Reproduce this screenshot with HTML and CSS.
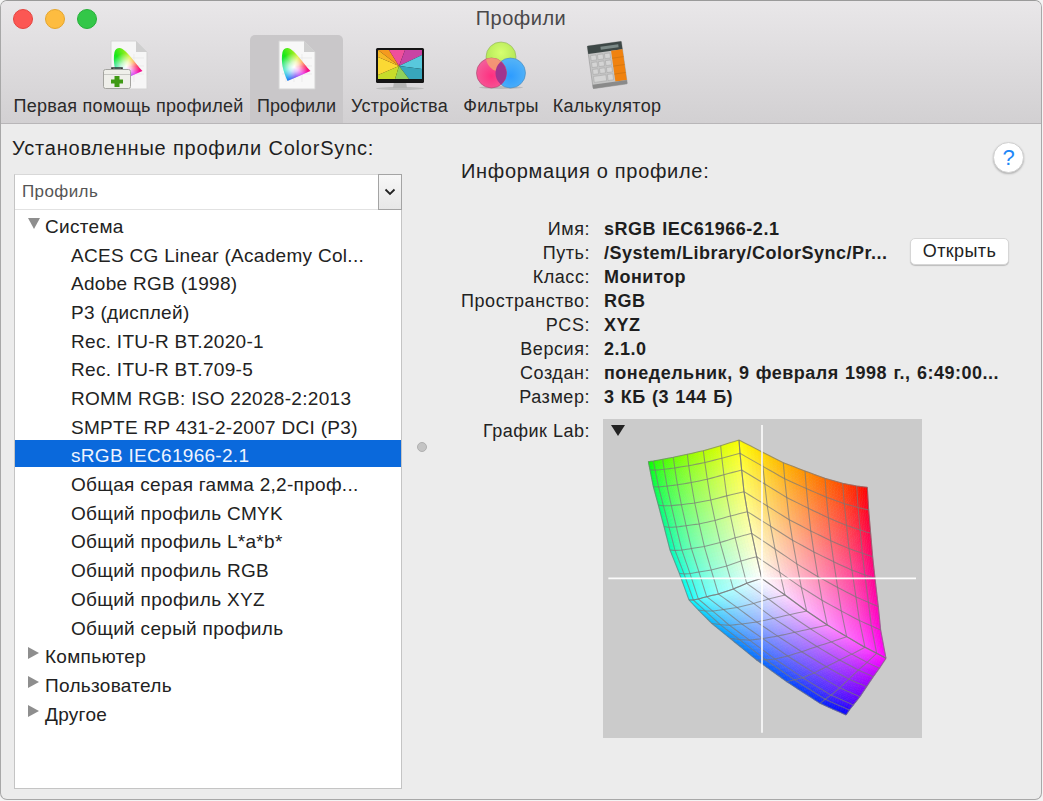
FILE: index.html
```html
<!DOCTYPE html>
<html lang="ru">
<head>
<meta charset="utf-8">
<title>Профили</title>
<link rel="stylesheet" href="styles.css">
</head>
<body>
<div class="window">
  <header class="toolbar">
    <div class="titlebar">
      <div class="lights">
        <span class="light red"></span>
        <span class="light yellow"></span>
        <span class="light green"></span>
      </div>
      <div class="title">Профили</div>
    </div>
    <nav class="tabs">
      <div class="tab tab-aid">
        <div class="icon doc-icon">
          <svg class="page" width="38" height="50" viewBox="0 0 38 50"><path d="M1 1H26L37 12V49H1Z" fill="#f6f6f6" stroke="#d4d4d4"/><path d="M26 1V12H37Z" fill="#cfcfcf"/><path d="M8 10V42M16 10V42M24 14V42M4 18H34M4 26H34M4 34H34" stroke="#e6e6e6" stroke-width=".7"/></svg>
          <div class="cie"></div>
          <svg class="kit" width="28" height="22" viewBox="0 0 28 22"><path d="M9 2.500V1H19V2.500" fill="none" stroke="#333" stroke-width="1.600"/><rect x=".5" y="2.500" width="27" height="19" rx="2" fill="#efefea" stroke="#a4a4a0"/><path d="M1 7.500H27" stroke="#c8c8c4"/><path d="M11.500 9H16.500V12.500H20V16.500H16.500V20H11.500V16.500H8V12.500H11.500Z" fill="#3f9a14"/></svg>
        </div>
        <span class="tab-label">Первая помощь профилей</span>
      </div>
      <div class="tab tab-profiles active">
        <div class="icon doc-icon">
          <svg class="page" width="38" height="50" viewBox="0 0 38 50"><path d="M1 1H26L37 12V49H1Z" fill="#f8f8f8" stroke="#d4d4d4"/><path d="M26 1V12H37Z" fill="#cfcfcf"/><path d="M8 10V42M16 10V42M24 14V42M4 18H34M4 26H34M4 34H34" stroke="#e6e6e6" stroke-width=".7"/></svg>
          <div class="cie"></div>
        </div>
        <span class="tab-label label-tight">Профили</span>
      </div>
      <div class="tab tab-devices">
        <svg class="icon" width="50" height="44" viewBox="0 0 50 44">
          <ellipse cx="25" cy="41.500" rx="24" ry="1.500" fill="#bdbdbd"/>
          <path d="M19 35H31L32 41H18Z" fill="#b4b4b4"/>
          <rect x="1" y="1" width="48" height="35" rx="1.500" fill="#141414"/>
          <polygon points="3,3 14,3 24,19" fill="#f59a1f"/>
          <polygon points="14,3 30,3 24,19" fill="#ef4f9c"/>
          <polygon points="30,3 47,3 47,8 24,19" fill="#c844a4"/>
          <polygon points="47,8 47,22 24,19" fill="#58c8dc"/>
          <polygon points="47,22 47,32 34,32 24,19" fill="#38a6bc"/>
          <polygon points="34,32 20,32 24,19" fill="#8fd05a"/>
          <polygon points="20,32 3,32 3,28 24,19" fill="#c7dc2a"/>
          <polygon points="3,28 3,10 24,19" fill="#fbd934"/>
          <polygon points="3,10 3,3 24,19" fill="#f7b927"/>
        </svg>
        <span class="tab-label">Устройства</span>
      </div>
      <div class="tab tab-filters">
        <svg class="icon" width="52" height="50" viewBox="0 0 52 50">
          <defs>
            <radialGradient id="gG" cx=".5" cy=".35" r=".7"><stop offset="0" stop-color="#d6ff70"/><stop offset="1" stop-color="#a9e050"/></radialGradient>
            <radialGradient id="gP" cx=".5" cy=".6" r=".7"><stop offset="0" stop-color="#ff2f80"/><stop offset="1" stop-color="#f06aa0"/></radialGradient>
            <radialGradient id="gB" cx=".5" cy=".6" r=".7"><stop offset="0" stop-color="#2d9cff"/><stop offset="1" stop-color="#5cb8f5"/></radialGradient>
            <clipPath id="clipPink"><circle cx="16.500" cy="33" r="15"/></clipPath>
          </defs>
          <ellipse cx="26" cy="47.500" rx="22" ry="1.500" fill="#bbb"/>
          <circle cx="26" cy="17" r="15" fill="url(#gG)" stroke="#8fb05a" stroke-width=".6"/>
          <circle cx="35.500" cy="33" r="15" fill="url(#gB)" stroke="#4a88b8" stroke-width=".6"/>
          <circle cx="16.500" cy="33" r="15" fill="url(#gP)" stroke="#a8446c" stroke-width=".6"/>
          <g clip-path="url(#clipPink)">
            <circle cx="26" cy="17" r="15" fill="#f2a070" fill-opacity=".85"/>
            <circle cx="35.500" cy="33" r="15" fill="#a0358f"/>
          </g>
        </svg>
        <span class="tab-label">Фильтры</span>
      </div>
      <div class="tab tab-calc">
        <svg class="icon" width="46" height="50" viewBox="0 0 46 50">
          <g transform="rotate(-8 23 25)">
            <rect x="6" y="3.500" width="34.500" height="43" rx="1" fill="#c4c4c4" stroke="#8f8f8f" stroke-width=".5"/>
            <rect x="6" y="3.500" width="34.500" height="8" fill="#3e4847"/>
            <rect x="19" y="6" width="18" height="3" fill="#7b8987"/>
            <rect x="29" y="11.500" width="11.500" height="31" fill="#f0820f"/>
            <path d="M29 19H40.500M29 27H40.500M29 35H40.500" stroke="#c9700f" stroke-width=".6"/>
            <g fill="#d4d4d4" stroke="#9c9c9c" stroke-width=".4">
              <rect x="8" y="13.500" width="5.500" height="5"/><rect x="15" y="13.500" width="5.500" height="5"/><rect x="22" y="13.500" width="5.500" height="5"/>
              <rect x="8" y="20.500" width="5.500" height="5"/><rect x="15" y="20.500" width="5.500" height="5"/><rect x="22" y="20.500" width="5.500" height="5"/>
              <rect x="8" y="27.500" width="5.500" height="5"/><rect x="15" y="27.500" width="5.500" height="5"/><rect x="22" y="27.500" width="5.500" height="5"/>
              <rect x="8" y="34.500" width="12.500" height="6"/><rect x="22" y="34.500" width="5.500" height="6"/>
            </g>
            <rect x="6" y="42.500" width="34.500" height="4" fill="#8a8a8a"/>
          </g>
        </svg>
        <span class="tab-label">Калькулятор</span>
      </div>
    </nav>
  </header>

  <main class="content">
    <section class="left">
      <h2 class="left-title">Установленные профили ColorSync:</h2>
      <div class="list">
        <div class="list-head">
          <span class="list-head-label">Профиль</span>
          <span class="list-head-btn"><svg width="12" height="8" viewBox="0 0 12 8"><path d="M1.500 1.500L6 6L10.500 1.500" fill="none" stroke="#222" stroke-width="1.800"/></svg></span>
        </div>
        <ul class="rows">
          <li class="row group"><i class="tri tri-open"></i>Система</li>
          <li class="row item">ACES CG Linear (Academy Col...</li>
          <li class="row item">Adobe RGB (1998)</li>
          <li class="row item">P3 (дисплей)</li>
          <li class="row item">Rec. ITU-R BT.2020-1</li>
          <li class="row item">Rec. ITU-R BT.709-5</li>
          <li class="row item">ROMM RGB: ISO 22028-2:2013</li>
          <li class="row item">SMPTE RP 431-2-2007 DCI (P3)</li>
          <li class="row item selected">sRGB IEC61966-2.1</li>
          <li class="row item">Общая серая гамма 2,2-проф...</li>
          <li class="row item">Общий профиль CMYK</li>
          <li class="row item">Общий профиль L*a*b*</li>
          <li class="row item">Общий профиль RGB</li>
          <li class="row item">Общий профиль XYZ</li>
          <li class="row item">Общий серый профиль</li>
          <li class="row group"><i class="tri tri-closed"></i>Компьютер</li>
          <li class="row group"><i class="tri tri-closed"></i>Пользователь</li>
          <li class="row group"><i class="tri tri-closed"></i>Другое</li>
        </ul>
      </div>
    </section>

    <div class="splitter"><span class="splitter-dot"></span></div>

    <section class="right">
      <div class="right-head">
        <h2 class="right-title">Информация о профиле:</h2>
        <button class="help" type="button">?</button>
      </div>
      <dl class="info">
        <dt>Имя:</dt><dd>sRGB IEC61966-2.1</dd>
        <dt>Путь:</dt><dd class="path-row"><span class="path">/System/Library/ColorSync/Pr...</span><button class="open" type="button">Открыть</button></dd>
        <dt>Класс:</dt><dd>Монитор</dd>
        <dt>Пространство:</dt><dd>RGB</dd>
        <dt>PCS:</dt><dd>XYZ</dd>
        <dt>Версия:</dt><dd>2.1.0</dd>
        <dt>Создан:</dt><dd>понедельник, 9 февраля 1998 г., 6:49:00...</dd>
        <dt>Размер:</dt><dd>3 КБ (3 144 Б)</dd>
      </dl>
      <div class="lab">
        <div class="lab-label">График Lab:</div>
        <div class="lab-frame">
          <canvas id="gamut" width="319" height="319"></canvas>
          <i class="lab-tri"></i>
        </div>
      </div>
    </section>
  </main>
</div>
<script src="gamut.js"></script>
</body>
</html>
```

FILE: styles.css
```css
* { box-sizing: border-box; }
html, body { margin: 0; padding: 0; height: 100%; background: #f4f4f4; }
body { font-family: "Liberation Sans", Arial, sans-serif; font-size: 17px; color: #222; overflow: hidden; }

.window {
  width: 1042px; height: 800px;
  border-radius: 7px; overflow: hidden;
  border: 1px solid #a8a8a8; border-top-color: #9a9a9a;
  display: flex; flex-direction: column;
  background: #ececec;
}

.toolbar {
  height: 123px; flex: none;
  background: linear-gradient(#e9e7e9, #d2d0d2);
  border-bottom: 1px solid #b8b6b8;
  display: flex; flex-direction: column;
}
.titlebar { height: 34px; display: grid; grid-template-columns: 1fr auto 1fr; align-items: center; flex: none; }
.lights { display: flex; gap: 12px; padding-left: 12px; padding-top: 1px; }
.light { width: 20px; height: 20px; border-radius: 50%; }
.red { background: #fc5753; border: 1px solid #e5443f; }
.yellow { background: #fdbc40; border: 1px solid #e5a52c; }
.green { background: #33c748; border: 1px solid #27b03a; }
.title { font-size: 20px; color: #4a484a; letter-spacing: .5px; }

.tabs { display: flex; flex: 1; padding-left: 6px; align-items: stretch; }
.tab { display: flex; flex-direction: column; align-items: center; justify-content: flex-end; padding: 0 7px 7px; color: #2a2a2a; }
.tab-label { font-size: 18px; letter-spacing: .3px; line-height: 20px; white-space: nowrap; }
.label-tight { letter-spacing: .1px; }
.tab .icon { flex: none; }
.active { background: #c9c7c9; border-radius: 5px 5px 0 0; }

.tab-aid { width: 243px; }
.tab-profiles { width: 93px; }
.tab-devices { width: 113px; }
.tab-filters { width: 90px; }
.tab-calc { width: 122px; }
svg.icon { margin-bottom: 6px; }
.tab-devices svg.icon { margin-bottom: 5px; }

.doc-icon { position: relative; width: 38px; height: 50px; margin-bottom: 6px; }
.page { display: block; }
.cie {
  position: absolute; left: 0; top: 0; width: 38px; height: 50px;
  background:
    radial-gradient(circle at 16px 27px, #fff 0, rgba(255,255,255,.75) 5px, rgba(255,255,255,0) 14px),
    conic-gradient(from -40deg at 16px 27px, #18e818, #d8f020 60deg, #ff9010 95deg, #ff1040 125deg, #e810e0 165deg, #5010f0 210deg, #10a0f0 255deg, #10e0c0 290deg, #18e818 360deg);
  clip-path: path("M10 41 C6 32 3 22 5 12 C6 8 10 7 13 9 C20 14 26 24 33 31 Z");
}
.kit { position: absolute; left: -7px; top: 27px; }

.content { flex: 1; display: flex; min-height: 0; }
.left { width: 401px; flex: none; padding: 11px 0 10px 11px; display: flex; flex-direction: column; }
.left-title { font-size: 20px; letter-spacing: .8px; font-weight: 400; margin: 0 0 13px; line-height: 26px; color: #1e1e1e; white-space: nowrap; }
.list { margin-left: 2px; width: 388px; flex: 1; background: #fff; border: 1px solid #c4c4c4; border-top-color: #d8d8d8; display: flex; flex-direction: column; min-height: 0; }
.list-head { height: 35px; flex: none; display: flex; align-items: center; justify-content: space-between; border-bottom: 1px solid #e2e2e2; }
.list-head-label { padding-left: 7px; font-size: 17px; letter-spacing: .4px; color: #555; }
.list-head-btn { width: 24px; height: 36px; margin-right: -1px; margin-top: -1px; background: linear-gradient(#f7f7f7, #e7e7e7); border: 1px solid #a4a4a4; display: flex; align-items: center; justify-content: center; }
.rows { list-style: none; margin: 0; padding: 2.900px 0 0; }
.row { height: 28.700px; line-height: 28.700px; font-size: 19px; letter-spacing: .3px; white-space: nowrap; color: #222; }
.group { padding-left: 30px; position: relative; }
.item { padding-left: 56px; }
.selected { background: #0a69dc; color: #eef4ff; height: 27px; margin: -2.300px 0 4px; line-height: 32px; }
.tri { position: absolute; width: 0; height: 0; }
.tri-open { left: 13px; top: 5.200px; border-left: 6px solid transparent; border-right: 6px solid transparent; border-top: 11px solid #8e8e8e; }
.tri-closed { left: 13px; top: 4.200px; border-top: 6.500px solid transparent; border-bottom: 6.500px solid transparent; border-left: 11px solid #8e8e8e; }

.splitter { width: 40px; flex: none; display: flex; align-items: center; justify-content: center; padding-bottom: 29px; }
.splitter-dot { width: 10px; height: 10px; border-radius: 50%; background: #c4c4c4; border: 1px solid #b0b0b0; }

.right { flex: 1; padding-right: 17px; min-width: 0; margin-left: 19px; }
.right-head { display: flex; justify-content: space-between; height: 93px; }
.right-title { margin: 35px 0 0 0; font-size: 20px; letter-spacing: .7px; font-weight: 400; line-height: 24px; color: #222; }
.help { width: 31px; height: 31px; margin-top: 18px; border-radius: 50%; border: 1px solid #d0d0d0; background: #fff; box-shadow: 0 1px 2px rgba(0,0,0,.25); color: #1e88f7; font: 400 22px/28px "Liberation Sans", Arial, sans-serif; padding: 0; }

.info { display: grid; grid-template-columns: 129px 1fr; grid-auto-rows: 24px; column-gap: 14px; margin: 0; font-size: 18px; letter-spacing: .55px; line-height: 24px; }
.info dt { text-align: right; color: #222; white-space: nowrap; }
.info dd { margin: 0; font-weight: 700; white-space: nowrap; color: #1e1e1e; letter-spacing: .5px; word-spacing: .8px; }
.path-row { display: flex; align-items: center; justify-content: space-between; }
.open { width: 99px; height: 27px; margin-bottom: 4px; border: 1px solid #d6d6d6; border-radius: 5px; background: #fff; box-shadow: 0 1px 1px rgba(0,0,0,.2); font: 400 18px/24px "Liberation Sans", Arial, sans-serif; letter-spacing: .4px; color: #222; padding: 0; margin-right: 15px; }

.lab { display: grid; grid-template-columns: 129px auto; column-gap: 13px; margin-top: 10px; align-items: start; }
.lab-label { text-align: right; font-size: 18px; letter-spacing: .5px; line-height: 24px; white-space: nowrap; }
.lab-frame { position: relative; width: 319px; height: 319px; background: #cbcbcb; }
.lab-frame canvas { display: block; filter: blur(.4px); }
.lab-tri { position: absolute; left: 8px; top: 6px; width: 0; height: 0; border-left: 7px solid transparent; border-right: 7px solid transparent; border-top: 11px solid #222; }
```

FILE: gamut.js
```js
(function () {
  var cv = document.getElementById('gamut');
  var ctx = cv.getContext('2d');
  // coordinates are given in a 3x space whose origin is 13px/9px before the frame
  var E = {
    WY: [[515,505],[500,440],[485,370],[472,305],[462,245],[455,180],[450,130],[447,90]],
    WC: [[515,505],[470,520],[430,537],[385,552],[350,560],[325,567],[310,570],[297,570]],
    WM: [[515,505],[585,555],[650,603],[712,645],[770,680],[825,712],[860,730],[888,745]],
    YG: [[447,90],[392,107],[340,122],[292,133],[250,142],[218,148],[190,153],[175,155]],
    CG: [[297,570],[268,490],[240,420],[222,350],[205,285],[190,230],[180,180],[175,155]],
    YR: [[447,90],[515,125],[580,158],[645,183],[705,205],[758,220],[800,228],[832,232]],
    MR: [[888,745],[872,660],[865,590],[855,505],[848,440],[842,370],[836,300],[832,232]],
    MB: [[888,745],[868,775],[850,800],[830,830],[810,860],[790,885],[778,900],[768,915]],
    CB: [[297,570],[325,600],[365,640],[420,685],[500,750],[590,815],[690,880],[768,915]]
  };
  function at(e, t) {
    var f = t * 7, i = Math.min(6, Math.floor(f)), k = f - i;
    return [e[i][0] + (e[i + 1][0] - e[i][0]) * k, e[i][1] + (e[i + 1][1] - e[i][1]) * k];
  }
  function patch(a, b, c, d) {
    var p00 = a[0], p10 = a[7], p01 = b[0], p11 = b[7];
    return function (s, t) {
      var A = at(a, s), B = at(b, s), C = at(c, t), D = at(d, t), r = [];
      for (var i = 0; i < 2; i++) {
        r[i] = (1 - t) * A[i] + t * B[i] + (1 - s) * C[i] + s * D[i]
          - ((1 - s) * (1 - t) * p00[i] + s * (1 - t) * p10[i] + (1 - s) * t * p01[i] + s * t * p11[i]);
      }
      return r;
    };
  }
  var faces = [
    { p: patch(E.WY, E.CG, E.WC, E.YG), col: function (s, t) { return [1 - t, 1, 1 - s]; } },
    { p: patch(E.WY, E.MR, E.WM, E.YR), col: function (s, t) { return [1, 1 - t, 1 - s]; } },
    { p: patch(E.WC, E.MB, E.WM, E.CB), col: function (s, t) { return [1 - s, 1 - t, 1]; } }
  ];
  ctx.setTransform(1 / 3, 0, 0, 1 / 3, -13, -9);
  var N = 42;
  faces.forEach(function (f) {
    for (var i = 0; i < N; i++) for (var j = 0; j < N; j++) {
      var s0 = i / N, s1 = (i + 1) / N, t0 = j / N, t1 = (j + 1) / N;
      var c = f.col((s0 + s1) / 2, (t0 + t1) / 2);
      var css = 'rgb(' + Math.round(c[0] * 255) + ',' + Math.round(c[1] * 255) + ',' + Math.round(c[2] * 255) + ')';
      var q = [f.p(s0, t0), f.p(s1, t0), f.p(s1, t1), f.p(s0, t1)];
      ctx.beginPath();
      ctx.moveTo(q[0][0], q[0][1]);
      for (var k = 1; k < 4; k++) ctx.lineTo(q[k][0], q[k][1]);
      ctx.closePath();
      ctx.fillStyle = css; ctx.strokeStyle = css; ctx.lineWidth = 1.5;
      ctx.fill(); ctx.stroke();
    }
  });
  ctx.strokeStyle = 'rgba(120,120,120,.7)';
  ctx.lineWidth = 3.2;
  faces.forEach(function (f) {
    for (var g = 0; g <= 7; g++) {
      var a, x;
      ctx.beginPath();
      for (a = 0; a <= 28; a++) { x = f.p(g / 7, a / 28); ctx[a ? 'lineTo' : 'moveTo'](x[0], x[1]); }
      ctx.stroke();
      ctx.beginPath();
      for (a = 0; a <= 28; a++) { x = f.p(a / 28, g / 7); ctx[a ? 'lineTo' : 'moveTo'](x[0], x[1]); }
      ctx.stroke();
    }
  });
  ctx.strokeStyle = 'rgba(255,255,255,.92)';
  ctx.lineWidth = 5;
  ctx.beginPath(); ctx.moveTo(55, 505); ctx.lineTo(978, 505); ctx.stroke();
  ctx.beginPath(); ctx.moveTo(516, 45); ctx.lineTo(516, 968); ctx.stroke();
})();
```
